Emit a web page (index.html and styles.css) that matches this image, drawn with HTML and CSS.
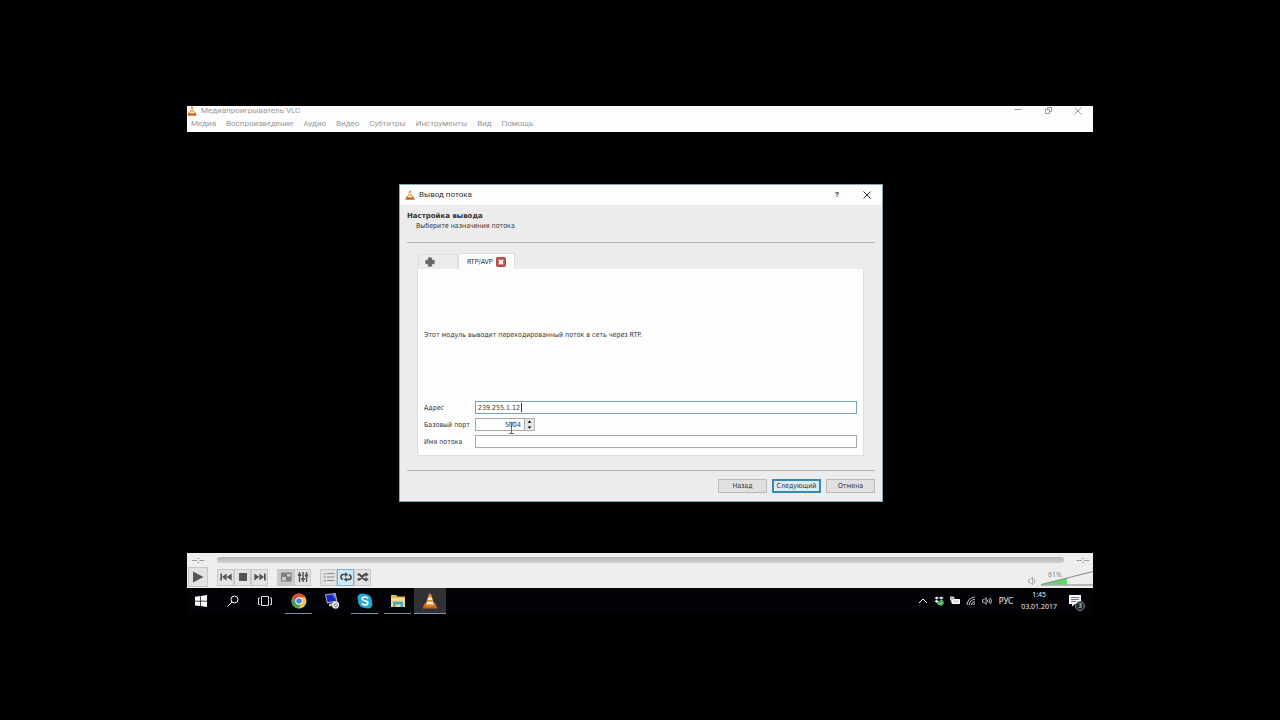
FILE: index.html
```html
<!DOCTYPE html>
<html lang="ru">
<head>
  <meta charset="UTF-8" />
  <meta name="viewport" content="width=device-width, initial-scale=1.0"/>
  <title>Медиапроигрыватель VLC</title>
  <link rel="stylesheet" href="styles.css">
</head>
<body>
  <svg class="defs" aria-hidden="true">
    <symbol id="cone" viewBox="0 0 16 16">
      <path fill="#c8651b" d="M2.6 10h10.8l2 5.500H.6z"/>
      <path fill="#e88a2c" d="M7 .8h2L12.500 12.400c-2 1.300-7 1.300-9 0z"/>
      <path fill="#f2efec" d="M6.200 4.400h3.600l.7 2.600h-5zM5 8.800h6l.7 2.400H4.300z"/>
    </symbol>
    <symbol id="cross" viewBox="0 0 10 10">
      <path fill="none" stroke="currentColor" d="M1.5 1.5l7 7M8.5 1.5l-7 7"/>
    </symbol>
  </svg>

  <div class="screen">
    <header class="window-head">
      <div class="title-row">
        <svg class="cone"><use href="#cone"/></svg>
        <h1>Медиапроигрыватель VLC</h1>
        <div class="window-buttons">
          <button aria-label="Свернуть"><svg viewBox="0 0 10 10"><path d="M1.5 3.5h7" stroke="currentColor"/></svg></button>
          <button aria-label="Развернуть"><svg viewBox="0 0 10 10"><path d="M2.5 3.5h4v4h-4zM4.5 3.5v-2h4v4h-2" fill="none" stroke="currentColor"/></svg></button>
          <button aria-label="Закрыть"><svg><use href="#cross"/></svg></button>
        </div>
      </div>
      <nav class="menu">
        <a href="#">Медиа</a>
        <a href="#">Воспроизведение</a>
        <a href="#">Аудио</a>
        <a href="#">Видео</a>
        <a href="#">Субтитры</a>
        <a href="#">Инструменты</a>
        <a href="#">Вид</a>
        <a href="#">Помощь</a>
      </nav>
    </header>

    <main class="stage">
      <section class="dialog" role="dialog" aria-labelledby="dialogTitle">
        <div class="dialog-title">
          <svg class="cone"><use href="#cone"/></svg>
          <span id="dialogTitle">Вывод потока</span>
          <div class="window-buttons">
            <button class="help" aria-label="Справка">?</button>
            <button aria-label="Закрыть"><svg><use href="#cross"/></svg></button>
          </div>
        </div>

        <form class="dialog-body" onsubmit="return false">
          <div class="intro">
            <h2>Настройка вывода</h2>
            <p>Выберите назначения потока</p>
          </div>

          <div class="tabs">
            <div class="tab-bar">
              <button type="button" class="tab tab-add" aria-label="Добавить">
                <svg viewBox="0 0 10 10"><path fill="#666" stroke="#555" stroke-width=".5" d="M3.3.7h3.4v2.600h2.600v3.400H6.700v2.600H3.300V6.700H.7V3.300h2.600z"/></svg>
              </button>
              <div class="tab tab-active">
                <span>RTP/AVP</span>
                <button type="button" class="tab-close" aria-label="Закрыть вкладку">
                  <svg viewBox="0 0 10 10"><rect x=".5" y=".5" width="9" height="9" rx="1" fill="#c4574c" stroke="#a8483f"/><path d="M3 3l4 4M7 3L3 7" stroke="#fff" stroke-width="1.8"/></svg>
                </button>
              </div>
            </div>

            <div class="panel">
              <p class="note">Этот модуль выводит перекодированный поток в сеть через RTP.</p>
              <div class="fields">
                <label for="address">Адрес</label>
                <div class="field">
                  <input type="text" id="address" class="focused" value="239.255.1.12">
                  <span class="caret"></span>
                </div>
                <label for="port">Базовый порт</label>
                <div class="field spin">
                  <input type="text" id="port" inputmode="numeric" value="5004">
                  <span class="steps">
                    <button type="button" aria-label="Больше"><svg viewBox="0 0 6 4"><path d="M3 .5l2.5 3h-5z"/></svg></button>
                    <button type="button" aria-label="Меньше"><svg viewBox="0 0 6 4"><path d="M3 3.5L.5.5h5z"/></svg></button>
                  </span>
                  <svg class="ibeam" viewBox="0 0 7 12"><path d="M1 .5h1.5l1 1 1-1H6M3.5 1v10M1 11.5h5" fill="none" stroke="#666"/></svg>
                </div>
                <label for="stream">Имя потока</label>
                <div class="field"><input type="text" id="stream"></div>
              </div>
            </div>
          </div>

          <div class="actions">
            <button type="button">Назад</button>
            <button type="submit" class="default">Следующий</button>
            <button type="button">Отмена</button>
          </div>
        </form>
      </section>
    </main>

    <section class="player">
      <div class="seek">
        <span>--:--</span>
        <input type="range" min="0" max="100" value="0" aria-label="Позиция">
        <span>--:--</span>
      </div>
      <div class="controls">
        <button class="play" aria-label="Воспроизвести"><svg viewBox="0 0 12 12"><path d="M1 .5v11L11.5 6z"/></svg></button>
        <div class="group">
          <button aria-label="Назад"><svg viewBox="0 0 12 12"><path d="M.3 2.500H2v7H.3zM6.600 2.500v7L2 6zM11.700 2.500v7L6.600 6z"/></svg></button>
          <button aria-label="Стоп"><svg viewBox="0 0 12 12"><path d="M2 2h8v8H2z"/></svg></button>
          <button aria-label="Вперёд"><svg viewBox="0 0 12 12"><path d="M10 2.500h1.700v7H10zM5.400 2.500v7L10 6zM.3 2.500v7L5.400 6z"/></svg></button>
        </div>
        <div class="group">
          <button class="pressed" aria-label="Во весь экран"><svg viewBox="0 0 12 12"><path d="M1 1.500h10.500v9H1z" fill="#7e7e7e"/><path d="M7 3h3.500v2.500H7zM2 6h4v3.500H2z" fill="#ccc"/></svg></button>
          <button aria-label="Эквалайзер"><svg viewBox="0 0 12 12"><path d="M1.800 1h1.500v10H1.800zM5.300 1h1.500v10H5.300zM8.800 1h1.500v10H8.800zM.8 3h3.500v2H.8zM4.300 7h3.500v2H4.300zM7.800 3.500h3.500v2H7.800z"/></svg></button>
        </div>
        <div class="group">
          <button aria-label="Плейлист"><svg viewBox="0 0 12 12"><path fill="#888" d="M1 2h1.500v1.500H1zM1 5.500h1.500V7H1zM1 9h1.500v1.500H1zM4 2h7.500v1H4zM4 5.500h7.500v1H4zM4 9h7.500v1H4z"/></svg></button>
          <button class="checked" aria-label="Повтор"><svg viewBox="0 0 12 12"><path d="M6.500 8.500H9q2-.2 2-2.300T9 4M5.500 3.500H3Q1 3.800 1 5.900T3 8" fill="none" stroke="#444" stroke-width="1.6"/><path d="M5 1.300l3.500 2.300L5 5.900zM7 6.200L3.500 8.500 7 10.800z"/></svg></button>
          <button aria-label="Случайно"><svg viewBox="0 0 12 12"><path d="M.5 3.500h2l5 5h2M.5 8.500h2l5-5h2" fill="none" stroke="#444" stroke-width="1.8"/><path d="M8.500 1l3.300 2.500L8.500 6zM8.500 6l3.300 2.500L8.500 11z"/></svg></button>
        </div>
        <div class="volume">
          <button aria-label="Без звука"><svg viewBox="0 0 10 10"><path d="M1.500 3.500h1.700l2.300-2.500v8L3.200 6.500H1.500zM7 2.500q2 2.500 0 5" fill="none" stroke="#999" stroke-width=".8"/></svg></button>
          <div class="wedge">
            <svg viewBox="0 0 52 16"><path d="M1 14.500L26 8v6.500z" fill="#5edb65"/><path d="M0 14.500L52 1.500M0 15h52" fill="none" stroke="#858585"/></svg>
            <output for="volume">61%</output>
            <input type="range" id="volume" min="0" max="125" value="61" aria-label="Громкость">
          </div>
        </div>
      </div>
    </section>

    <footer class="taskbar">
      <div class="system">
        <button aria-label="Пуск"><svg viewBox="0 0 12 12"><path fill="#fff" d="M0 1.700l5-.7v4.700H0zM5.700.9L12 0v5.700H5.700zM0 6.400h5v4.700l-5-.7zM5.700 6.400H12V12l-6.300-.9z"/></svg></button>
        <button aria-label="Поиск"><svg viewBox="0 0 12 12"><path fill="none" stroke="#fff" d="M.8 11.300L5 7M11 4.500a3.500 3.500 0 1 1-7 0 3.500 3.500 0 0 1 7 0z"/></svg></button>
        <button aria-label="Представление задач"><svg viewBox="0 0 14 12"><path fill="none" stroke="#ddd" d="M3.500 1.500h7v9h-7zM2 3H.5v6.500H2M12 3h1.500v6.500H12"/></svg></button>
      </div>
      <div class="apps">
        <button class="running" aria-label="Chrome">
          <svg viewBox="0 0 16 16"><circle cx="8" cy="8" r="7.500" fill="#f0c73c"/><path fill="#dc4a3d" d="M1.500 4.300A7.500 7.500 0 0 1 14.500 4.300H8L5 9.800z"/><path fill="#45a354" d="M1.500 4.300L5 9.800 8 11.500l2.500-.8L7.500 15.500A7.500 7.500 0 0 1 1.500 4.300z"/><circle cx="8" cy="8" r="3.700" fill="#fff"/><circle cx="8" cy="8" r="2.800" fill="#4a83e0"/></svg>
        </button>
        <button aria-label="Удалённый рабочий стол">
          <svg viewBox="0 0 16 16"><path fill="#b8c6dc" d="M1 1.500L11.500 0l2 8.500L3 10.500z"/><path fill="#1825b8" d="M2 2.300l8.800-1.200 1.600 6.700-8.800 1.500z"/><path fill="#6684e6" d="M8 1.500l2.800-.4 1.600 6.700z"/><path fill="#c6cbd2" d="M5 11l5-1 1 2-6 1.500z"/><circle cx="11.500" cy="12" r="3.700" fill="#d9dddd"/><path d="M9.500 12.500l3-2M11 14l3-2" stroke="#6b8571"/></svg>
        </button>
        <button class="running" aria-label="Skype">
          <svg viewBox="0 0 16 16"><circle cx="5" cy="5" r="4.500" fill="#25a9d8"/><circle cx="11" cy="11" r="4.500" fill="#25a9d8"/><circle cx="8" cy="8" r="7" fill="#25a9d8"/><path d="M11 5.300Q9.800 3.800 7.500 4 5 4.400 5.300 6 5.500 7.400 8 7.900q2.900.6 2.800 2.200-.3 1.900-3 1.800Q5.800 11.800 5 10.300" fill="none" stroke="#fff" stroke-width="1.7"/></svg>
        </button>
        <button class="running" aria-label="Проводник">
          <svg viewBox="0 0 16 16"><path fill="#e3bd57" d="M1 2h5l1.500 1.500H15V14H1z"/><path fill="#f6dd8c" d="M1 5h14v9H1z"/><path fill="#4daac7" d="M3 8.500h10V14h-2.500v-2.500h-5V14H3z"/></svg>
        </button>
        <button class="running current" aria-label="VLC"><svg><use href="#cone"/></svg></button>
      </div>
      <div class="tray">
        <button aria-label="Скрытые значки"><svg viewBox="0 0 10 10"><path d="M1 7l4-4 4 4" fill="none" stroke="#fff"/></svg></button>
        <button aria-label="Dropbox"><svg viewBox="0 0 10 10"><path fill="#e6f2ea" d="M3 .5l2 1.500-2.500 1.500L.5 2zM7 .5L9.500 2l-2 1.500L5 2zM2.500 3.700L5 5.500 3 7 .5 5.300zM7.500 3.700l2 1.600L7 7 5 5.500zM3 7.500l2-1.300 2 1.300-2 1.500z"/><circle cx="7" cy="7" r="2.800" fill="#37a853"/><path d="M5.700 7l1 1 1.700-2" fill="none" stroke="#fff" stroke-width=".7"/></svg></button>
        <button aria-label="Батарея"><svg viewBox="0 0 10 10"><path d="M2.500 3.500h7v4h-7z" fill="#ddd" stroke="#fff"/><path d="M0 1h4v3H0zM1.500 4v3" fill="#aaa" stroke="#fff" stroke-width=".7"/></svg></button>
        <button aria-label="Сеть"><svg viewBox="0 0 10 10"><path d="M1 9Q1.500 2 9 1M3.300 9Q3.500 4 9 3.300M5.500 9q0-3 3.500-3.400M7.500 9q.2-1.200 1.500-1.400" fill="none" stroke="#ddd" stroke-width=".9"/></svg></button>
        <button aria-label="Звук"><svg viewBox="0 0 12 10"><path d="M.5 3.500h2L5 1v8L2.500 6.500h-2zM6.500 3.500q1 1.500 0 3M8.300 2.300q2 2.700 0 5.400M10 1q3 4 0 8" fill="none" stroke="#eee" stroke-width=".9"/></svg></button>
        <button class="lang">РУС</button>
        <button class="clock"><time datetime="2017-01-03T01:45">1:45<br>03.01.2017</time></button>
        <button class="notices" aria-label="Уведомления">
          <svg viewBox="0 0 12 12"><path fill="#fff" d="M0 0h12v9H6l-3 2.500V9H0z"/><path d="M2 2.500h8M2 4.500h8M2 6.500h5" stroke="#555" stroke-width=".8"/></svg>
          <span class="badge">3</span>
        </button>
      </div>
    </footer>
  </div>
</body>
</html>
```
FILE: styles.css
```css
:root {
  --ui: Roboto, "Noto Sans", sans-serif;
  --tray: "Noto Sans", "Open Sans", sans-serif;
  --form: "DejaVu Sans Condensed", "DejaVu Sans", sans-serif;
  --face: #ececec;
  --white: #fdfdfd;
  --line: #b2b5b4;
  --accent: #3989ad;
}

* {
  box-sizing: border-box;
}

body {
  margin: 0;
  background: #000;
  color: #333;
  font: 8px/10px var(--ui);
}

h1, h2, p {
  margin: 0;
  font-size: inherit;
  font-weight: normal;
}

button {
  display: flex;
  align-items: center;
  justify-content: center;
  padding: 0;
  border: 0;
  background: none;
  color: inherit;
  font: inherit;
}

svg {
  display: block;
  width: 10px;
  height: 10px;
  flex: none;
}

.defs {
  position: absolute;
  width: 0;
  height: 0;
}

.screen {
  margin: 106px 187px;
}

/* main window */
.window-head {
  background: var(--white);
  color: #999;
}

.title-row {
  display: flex;
  gap: 4px;
  height: 10px;
}

.window-buttons {
  display: flex;
  margin-left: auto;
}

.window-buttons button {
  width: 30px;
}

.window-buttons .help {
  font-weight: bold;
}

.menu {
  display: flex;
  gap: 10px;
  padding: 3px 4px;
}

.menu a {
  color: inherit;
  text-decoration: none;
}

.stage {
  display: flex;
  justify-content: center;
  padding: 52px 0 51px 2px;
}

/* dialog */
.dialog {
  display: flex;
  flex-direction: column;
  width: 484px;
  height: 318px;
  border: 1px solid #83abb5;
  background: var(--face);
  font-family: var(--form);
}

.dialog-title {
  display: flex;
  align-items: center;
  gap: 4px;
  height: 20px;
  padding-left: 5px;
  background: var(--white);
  font-family: var(--ui);
}

.dialog-body {
  display: flex;
  flex: 1;
  flex-direction: column;
  padding: 6px 7px 8px;
  font-size: 7px;
}

.intro {
  padding-bottom: 11px;
  border-bottom: 1px solid var(--line);
}

.intro h2 {
  font-family: "DejaVu Sans", sans-serif;
  font-weight: bold;
}

.intro p {
  padding-left: 9px;
}

.tabs {
  display: flex;
  flex: 1;
  flex-direction: column;
  padding: 10px 11px 14px 10px;
}

.tab-bar {
  display: flex;
  align-items: flex-end;
}

.tab {
  display: flex;
  align-items: center;
  border: 1px solid #dedede;
  border-bottom: 0;
}

.tab-add {
  width: 40px;
  height: 15px;
  margin-left: 1px;
  padding-right: 17px;
}

.tab-active {
  gap: 3px;
  height: 16px;
  padding: 0 8px;
  background: var(--white);
}

.panel {
  display: flex;
  flex: 1;
  flex-direction: column;
  padding: 0 6px 7px;
  border: 1px solid #dedede;
  border-top: 0;
  background: var(--white);
}

.note {
  display: flex;
  flex: 1;
  align-items: center;
}

.fields {
  display: grid;
  grid-template-columns: 47px 1fr;
  align-items: center;
  gap: 4px;
}

.field {
  position: relative;
  display: flex;
  height: 13px;
}

.field input {
  width: 100%;
  min-width: 0;
  padding: 0 2px;
  border: 1px solid #a5a8a8;
  background: #fff;
  color: #333;
  font: 7px/10px var(--form);
  outline: none;
}

.field .focused {
  border-color: #72a5ae;
}

.caret {
  position: absolute;
  top: 2px;
  left: 46px;
  width: 1px;
  height: 9px;
  background: #333;
}

.spin {
  width: 60px;
}

.spin input {
  padding-right: 3px;
  text-align: right;
}

.steps {
  display: flex;
  flex: none;
  flex-direction: column;
  width: 10px;
  border: 1px solid #b5b5b5;
  border-left: 0;
  background: #e6e6e6;
}

.steps button {
  flex: 1;
}

.steps svg {
  width: 5px;
  height: 3px;
}

.field .ibeam {
  position: absolute;
  top: 4px;
  left: 33px;
  width: 7px;
  height: 12px;
}

.actions {
  display: flex;
  justify-content: flex-end;
  gap: 5px;
  padding-top: 8px;
  border-top: 1px solid var(--line);
}

.actions button {
  width: 49px;
  height: 14px;
  border: 1px solid #bababa;
  background: #e0e0e0;
}

.actions .default {
  border: 2px solid var(--accent);
  background: #dcebf2;
}

/* playback bar */
.player {
  background: #eee;
  color: #666;
}

.seek {
  display: flex;
  align-items: center;
  gap: 13px;
  height: 13px;
  padding: 0 4px 0 5px;
  font-family: var(--tray);
}

.seek input {
  flex: 1;
  height: 6px;
  margin: 0;
  border-radius: 3px;
  background: linear-gradient(#b8b8b8, #d0d0d0);
  appearance: none;
}

.seek input::-webkit-slider-thumb {
  width: 1px;
  opacity: 0;
  appearance: none;
}

.controls {
  display: flex;
  align-items: center;
  gap: 9px;
  height: 22px;
  padding-left: 1px;
}

.controls button {
  width: 17px;
  height: 17px;
  border: 1px solid #c8c8c8;
  background: #e3e3e3;
}

.controls svg {
  width: 12px;
  height: 12px;
  fill: #555;
}

.controls .play {
  width: 20px;
  height: 20px;
}

.controls .pressed {
  background: #c9c9c9;
}

.controls .checked {
  border-color: #77b5d5;
  background: #cde8f6;
}

.group {
  display: flex;
}

.volume {
  display: flex;
  align-items: flex-end;
  align-self: flex-end;
  gap: 4px;
  margin-left: auto;
  padding-bottom: 2px;
}

.volume button {
  width: 10px;
  height: 10px;
  border: 0;
  background: none;
}

.volume button svg {
  width: 10px;
  height: 10px;
}

.wedge {
  position: relative;
}

.wedge svg {
  width: 52px;
  height: 16px;
}

.wedge output {
  position: absolute;
  top: 0;
  left: 7px;
  color: #888;
  font: 7px/10px var(--tray);
}

.wedge input {
  position: absolute;
  inset: 0;
  width: 100%;
  margin: 0;
  opacity: 0;
}

/* taskbar */
.taskbar {
  display: flex;
  justify-content: space-between;
  height: 26px;
  background: #020207;
  color: #eee;
}

.system, .apps, .tray {
  display: flex;
}

.system {
  gap: 5px;
  margin-right: 7px;
}

.system button, .apps button {
  width: 27px;
}

.system svg {
  width: 12px;
  height: 12px;
}

.system button:last-child svg {
  width: 14px;
}

.apps {
  flex: 1;
  gap: 6px;
}

.apps svg {
  width: 16px;
  height: 16px;
}

.apps .running {
  border-bottom: 1px solid #8293b0;
}

.apps .current {
  width: 32px;
  margin-left: -3px;
  background: #303236;
}

.tray {
  align-items: center;
  gap: 6px;
  padding-right: 8px;
  font-family: var(--tray);
}

.tray .lang {
  margin-left: 1px;
}

.tray .clock {
  margin: 0 6px 0 2px;
  font-size: 7px;
  line-height: 12px;
}

.notices {
  position: relative;
  width: 16px;
  justify-content: flex-start;
}

.notices svg {
  width: 12px;
  height: 12px;
}

.badge {
  position: absolute;
  right: 0;
  bottom: -4px;
  width: 10px;
  height: 10px;
  border: 1px solid #888;
  border-radius: 50%;
  background: #222;
  font-size: 7px;
  line-height: 8px;
}
```
